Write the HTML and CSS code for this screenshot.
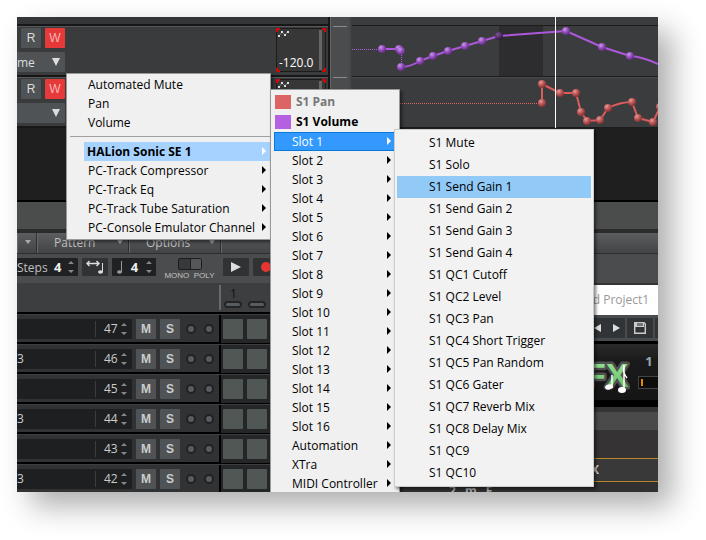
FILE: index.html
```html
<!DOCTYPE html>
<html lang="en">
<head>
<meta charset="utf-8">
<title>Automation menu</title>
<link rel="stylesheet" href="styles.css">
</head>
<body>
<svg class="defs" aria-hidden="true">
  <defs>
    <radialGradient id="violet" cx=".35" cy=".3" r=".75"><stop offset="0" stop-color="#c79ae6"/><stop offset=".5" stop-color="#934dbd"/><stop offset="1" stop-color="#5a2a78"/></radialGradient>
    <radialGradient id="dusk" cx=".35" cy=".3" r=".75"><stop offset="0" stop-color="#7d5596"/><stop offset="1" stop-color="#2c123c"/></radialGradient>
    <radialGradient id="coral" cx=".35" cy=".3" r=".75"><stop offset="0" stop-color="#e79b9b"/><stop offset=".5" stop-color="#b95454"/><stop offset="1" stop-color="#7c3030"/></radialGradient>
    <linearGradient id="leaf" x1="0" y1="0" x2="0" y2="1"><stop offset="0" stop-color="#9be898"/><stop offset="1" stop-color="#63b864"/></linearGradient>
    <symbol id="spin" viewBox="0 0 6 14"><path d="M0 4 3 1 6 4zM0 10 3 13 6 10z" fill="#85898b"/></symbol>
    <symbol id="nodes" viewBox="0 0 11 8"><path d="M1 6 4 2 7 5 10 1" fill="none" stroke="#999" stroke-width=".7"/><path d="M0 5h2v2H0zM3 1h2v2H3zM6 4h2v2H6zM9 1h2v2H9z" fill="#ddd"/></symbol>
    <symbol id="corners" viewBox="0 0 50 44"><path d="M1 4V1H4M46 1H49V4M49 40V43H46M4 43H1V40" fill="none" stroke="#f00" stroke-width="1.6"/></symbol>
  </defs>
</svg>
<main class="app">
  <section class="tracks">
    <div class="console">
      <div class="strip"></div>
      <div class="track">
        <div class="track-controls">
          <div class="pair"><button class="key">R</button><button class="key write">W</button></div>
          <select class="lane-select" aria-label="Track 1 lane"><option>me</option></select>
        </div>
        <div class="readout">
          <svg class="corners"><use href="#corners"/></svg>
          <svg class="nodes"><use href="#nodes"/></svg>
          <span>-120.0</span><i class="meter"></i>
        </div>
      </div>
      <div class="track">
        <div class="track-controls">
          <div class="pair"><button class="key">R</button><button class="key write">W</button></div>
          <select class="lane-select" aria-label="Track 2 lane"><option></option></select>
        </div>
        <div class="readout">
          <svg class="corners"><use href="#corners"/></svg>
          <svg class="nodes"><use href="#nodes"/></svg>
          <i class="meter"></i>
        </div>
      </div>
    </div>
    <div class="gutter"><i></i><i></i></div>
    <svg class="lanes" width="307" height="183" viewBox="351 17 307 183" aria-label="Automation envelopes">
      <path fill="#3b3c3e" d="M351 17h307v111H351z"/>
      <path fill="#2d2d2f" d="M499 26h44v50h-44z"/>
      <path stroke="#1c1c1d" d="M352 25.5H658M352 76.5H658M352 127.5H658" />
      <path stroke="#4a4b4d" d="M352 77.5H658"/>
      <path fill="#1f1f1f" d="M351 128h307v72H351z"/>
      <path stroke="#ad62dc" stroke-dasharray="1 1" fill="none" d="M352 49.5H382M401.500 51V66"/>
      <path stroke="#dc6464" stroke-dasharray="1 1" d="M352 103.500H541"/>
      <path stroke="#ad58dc" stroke-width="2" fill="none" d="M382 49H400M401 67Q410 67 420 61L433 56 448 51 465 46 482 41 499 36 566 31 602 47 630 56Q643 57 658 64"/>
      <path stroke="#dc5c5c" stroke-width="2" fill="none" stroke-linejoin="round" d="M542 103V84L560 93H576L581 112 587 121 600 120 608 108Q620 102 632 102L638 118 653 122 660 107"/>
      <path stroke="#fff" d="M555.500 17V128"/>
      <g fill="url(#violet)"><circle cx="382" cy="49" r="4"/><circle cx="399" cy="49" r="4"/><circle cx="401" cy="51" r="4"/><circle cx="401" cy="67" r="4"/><circle cx="420" cy="61" r="4"/><circle cx="433" cy="56" r="4"/><circle cx="448" cy="51" r="4"/><circle cx="465" cy="46" r="4"/><circle cx="482" cy="41" r="4"/><circle cx="566" cy="31" r="4"/><circle cx="602" cy="47" r="4"/><circle cx="630" cy="56" r="4"/></g>
      <circle cx="499" cy="36" r="4" fill="url(#dusk)"/>
      <g fill="url(#coral)"><circle cx="542" cy="84" r="4"/><circle cx="542" cy="103" r="4"/><circle cx="560" cy="93" r="4"/><circle cx="576" cy="93" r="4"/><circle cx="581" cy="112" r="4"/><circle cx="587" cy="121" r="4"/><circle cx="600" cy="120" r="4"/><circle cx="608" cy="108" r="4"/><circle cx="632" cy="102" r="4"/><circle cx="638" cy="118" r="4"/><circle cx="653" cy="122" r="4"/><circle cx="660" cy="107" r="4"/></g>
    </svg>
  </section>
  <div class="divider"></div>
  <nav class="tabs">
    <button class="tab first" aria-label="View"><i class="down"></i></button>
    <button class="tab">Pattern<i class="down"></i></button>
    <button class="tab">Options<i class="down"></i></button>
    <span class="tab rest"></span>
  </nav>
  <div class="transport">
    <div class="box steps"><span>Steps</span><b>4</b><svg class="spin"><use href="#spin"/></svg></div>
    <button class="box fit" aria-label="Fit to note"><svg width="18" height="14" viewBox="0 0 18 14"><path d="M1 3.500H13M3.500 1 1 3.500 3.500 6M10.500 1 13 3.500 10.500 6" fill="none" stroke="#ddd" stroke-width="1.4"/><path d="M16.500 3V12" stroke="#ddd"/><ellipse cx="14.500" cy="12" rx="2.500" ry="1.800" fill="#ddd"/></svg></button>
    <div class="box beat"><svg width="7" height="14" viewBox="0 0 7 14"><path d="M5.500 1V12" stroke="#999"/><ellipse cx="3.500" cy="12" rx="2.500" ry="1.800" fill="#999"/></svg><b>4</b><svg class="spin"><use href="#spin"/></svg></div>
    <div class="mode"><button class="switch" aria-label="Mono or poly"><i></i></button><span>MONO&nbsp; POLY</span></div>
    <button class="box play" aria-label="Play"><svg width="10" height="10" viewBox="0 0 10 10"><path d="M0 0 10 5 0 10z" fill="#ddd"/></svg></button>
    <button class="box rec" aria-label="Record"><svg width="10" height="10" viewBox="0 0 10 10"><circle cx="5" cy="5" r="5" fill="#e53535"/></svg></button>
  </div>
  <section class="lower">
    <div class="sequencer">
      <div class="ruler"><div class="beats"><span>1</span><div><i></i><i></i></div></div></div>
      <div class="row"><div class="name"><em></em><span>47</span><svg class="spin"><use href="#spin"/></svg></div><button class="key">M</button><button class="key">S</button><i class="dot"></i><i class="dot"></i><div class="cells"><i></i><i></i><i></i></div></div>
      <div class="row"><div class="name"><em>3</em><span>46</span><svg class="spin"><use href="#spin"/></svg></div><button class="key">M</button><button class="key">S</button><i class="dot"></i><i class="dot"></i><div class="cells"><i></i><i></i><i></i></div></div>
      <div class="row"><div class="name"><em></em><span>45</span><svg class="spin"><use href="#spin"/></svg></div><button class="key">M</button><button class="key">S</button><i class="dot"></i><i class="dot"></i><div class="cells"><i></i><i></i><i></i></div></div>
      <div class="row"><div class="name"><em>3</em><span>44</span><svg class="spin"><use href="#spin"/></svg></div><button class="key">M</button><button class="key">S</button><i class="dot"></i><i class="dot"></i><div class="cells"><i></i><i></i><i></i></div></div>
      <div class="row"><div class="name"><em></em><span>43</span><svg class="spin"><use href="#spin"/></svg></div><button class="key">M</button><button class="key">S</button><i class="dot"></i><i class="dot"></i><div class="cells"><i></i><i></i><i></i></div></div>
      <div class="row"><div class="name"><em>3</em><span>42</span><svg class="spin"><use href="#spin"/></svg></div><button class="key">M</button><button class="key">S</button><i class="dot"></i><i class="dot"></i><div class="cells"><i></i><i></i><i></i></div></div>
    </div>
    <div class="plugin">
      <div class="caption">ed Project1</div>
      <div class="plugin-bar">
        <div class="arrows">
          <button aria-label="Previous"><svg width="7" height="8" viewBox="0 0 7 8"><path d="M7 0V8L0 4z" fill="#ddd"/></svg></button>
          <button aria-label="Next"><svg width="7" height="8" viewBox="0 0 7 8"><path d="M0 0V8L7 4z" fill="#ddd"/></svg></button>
        </div>
        <button class="save" aria-label="Save"><svg width="12" height="12" viewBox="0 0 12 12"><path d="M.7.7H10L11.300 2V11.300H.7z" fill="none" stroke="#ccc" stroke-width="1.4"/><path d="M1 1H10V5H1z" fill="#ccc"/><path d="M3 1H9V4H3z" fill="#777"/></svg></button>
        <span class="stub"></span>
      </div>
      <div class="brand">
        <svg class="logo" width="36" height="46" viewBox="0 0 36 46" role="img" aria-label="FX">
          <text x="-9" y="37" class="logo-edge">FX</text>
          <text x="-9" y="37" class="logo-text">FX</text>
          <path d="M18 38V25M30 39V15Q28 22 33 28" fill="none" stroke="#fff" stroke-width="1.500"/>
          <ellipse cx="15" cy="37" rx="4" ry="2.500" fill="#fff" transform="rotate(-15 15 37)"/><ellipse cx="28" cy="40" rx="4" ry="3" fill="#fff"/>
        </svg>
        <div class="slot"><b>1</b><div><i></i></div></div>
      </div>
      <div class="panel-head"></div>
      <div class="panel-body"></div>
      <div class="panel-name"><b>X</b></div>
      <div class="foot"><b>2</b><b>m</b><b>F</b></div>
    </div>
  </section>

  <ul class="menu menu-root" role="menu">
    <li><button role="menuitem">Automated Mute</button></li>
    <li><button role="menuitem">Pan</button></li>
    <li><button role="menuitem">Volume</button></li>
    <li class="rule" role="separator"></li>
    <li class="sub chosen"><button role="menuitem">HALion Sonic SE 1</button></li>
    <li class="sub"><button role="menuitem">PC-Track Compressor</button></li>
    <li class="sub"><button role="menuitem">PC-Track Eq</button></li>
    <li class="sub"><button role="menuitem">PC-Track Tube Saturation</button></li>
    <li class="sub"><button role="menuitem">PC-Console Emulator Channel</button></li>
  </ul>
  <ul class="menu menu-slots" role="menu">
    <li class="param pan"><button role="menuitem">S1 Pan</button></li>
    <li class="param volume"><button role="menuitem">S1 Volume</button></li>
    <li class="sub active"><button role="menuitem">Slot 1</button></li>
    <li class="sub"><button role="menuitem">Slot 2</button></li>
    <li class="sub"><button role="menuitem">Slot 3</button></li>
    <li class="sub"><button role="menuitem">Slot 4</button></li>
    <li class="sub"><button role="menuitem">Slot 5</button></li>
    <li class="sub"><button role="menuitem">Slot 6</button></li>
    <li class="sub"><button role="menuitem">Slot 7</button></li>
    <li class="sub"><button role="menuitem">Slot 8</button></li>
    <li class="sub"><button role="menuitem">Slot 9</button></li>
    <li class="sub"><button role="menuitem">Slot 10</button></li>
    <li class="sub"><button role="menuitem">Slot 11</button></li>
    <li class="sub"><button role="menuitem">Slot 12</button></li>
    <li class="sub"><button role="menuitem">Slot 13</button></li>
    <li class="sub"><button role="menuitem">Slot 14</button></li>
    <li class="sub"><button role="menuitem">Slot 15</button></li>
    <li class="sub"><button role="menuitem">Slot 16</button></li>
    <li class="sub"><button role="menuitem">Automation</button></li>
    <li class="sub"><button role="menuitem">XTra</button></li>
    <li class="sub"><button role="menuitem">MIDI Controller</button></li>
  </ul>
  <ul class="menu menu-params" role="menu">
    <li><button role="menuitem">S1 Mute</button></li>
    <li><button role="menuitem">S1 Solo</button></li>
    <li class="hover"><button role="menuitem">S1 Send Gain 1</button></li>
    <li><button role="menuitem">S1 Send Gain 2</button></li>
    <li><button role="menuitem">S1 Send Gain 3</button></li>
    <li><button role="menuitem">S1 Send Gain 4</button></li>
    <li><button role="menuitem">S1 QC1 Cutoff</button></li>
    <li><button role="menuitem">S1 QC2 Level</button></li>
    <li><button role="menuitem">S1 QC3 Pan</button></li>
    <li><button role="menuitem">S1 QC4 Short Trigger</button></li>
    <li><button role="menuitem">S1 QC5 Pan Random</button></li>
    <li><button role="menuitem">S1 QC6 Gater</button></li>
    <li><button role="menuitem">S1 QC7 Reverb Mix</button></li>
    <li><button role="menuitem">S1 QC8 Delay Mix</button></li>
    <li><button role="menuitem">S1 QC9</button></li>
    <li><button role="menuitem">S1 QC10</button></li>
  </ul>
</main>
</body>
</html>
```
FILE: styles.css
```css
* { box-sizing: border-box; }
body { margin: 0; padding: 17px 48px 48px 17px; background: #fff; font: 12px/19px "Open Sans", "Noto Sans", sans-serif; }
button, select { font: inherit; color: inherit; border: 0; padding: 0; background: none; appearance: none; }
.defs { position: absolute; width: 0; height: 0; }
.app { position: relative; overflow: hidden; background: #1f1f1f; box-shadow: 14px 14px 28px rgba(0, 0, 0, .32); }

/* Track list */
.tracks { display: flex; height: 183px; overflow: hidden; }
.console { flex: 1; border-right: 2px solid #171717; }
.strip { height: 9px; background: #353638; border-bottom: 2px solid #171717; }
.track { display: flex; justify-content: space-between; height: 51px; padding: 1px 2px 0 0; background: #3a3b3d; border-top: 1px solid #55575a; border-bottom: 2px solid #171717; }
.track-controls { position: relative; width: 48px; }
.track-controls::after { content: ""; position: absolute; right: 5px; top: 30px; border: solid transparent; border-width: 8px 4px 0; border-top-color: #ddd; }
.pair { display: flex; gap: 4px; padding-left: 4px; margin-bottom: 4px; }
.key { width: 20px; height: 20px; line-height: 20px; border-radius: 1px; background: #4f5355; color: #ddd; font-family: "Liberation Sans", sans-serif; text-align: center; }
.key.write { background: #e63a3a; color: #f6b4b4; }
.lane-select { display: block; width: 48px; height: 20px; border-radius: 1px; color: #ddd; background: #4f5355; }
.readout { position: relative; display: flex; align-items: flex-end; justify-content: space-between; width: 50px; height: 44px; padding: 0 4px 0 2px; background: #373737; border: 1px solid #1c1c1c; color: #fff; line-height: 16px; }
.corners { position: absolute; top: -1px; left: -1px; width: 50px; height: 44px; }
.nodes { position: absolute; top: 1px; left: 1px; width: 11px; height: 8px; }
.meter { position: absolute; top: 1px; right: 3px; width: 3px; height: 40px; background: #666; }
.gutter { width: 21px; height: 111px; padding: 9px 2px 0; background: #4b4c4e; border-left: 1px solid #666; border-right: 2px solid #464749; }
.gutter i { display: block; height: 51px; border-top: 1px solid #8a8b8c; }
.lanes { flex: none; display: block; }

/* Pattern toolbar */
.divider { height: 33px; background: #4b4d4c; border-top: 2px solid #000; border-bottom: 4px solid #2b2b2c; }
.tabs { display: flex; height: 21px; background: linear-gradient(#5c5d5f, #434446); border-bottom: 1px solid #2e2e2f; }
.tab { display: flex; align-items: center; justify-content: space-between; width: 92px; height: 20px; padding: 0 5px 2px 16px; border-right: 1px solid #2e2e2f; border-left: 1px solid #68696b; color: #c0c0c0; font-size: 12px; }
.tab.first { width: 20px; padding-left: 7px; }
.tab.rest { flex: 1; border-right: 0; }
.down { border: solid transparent; border-width: 4px 3px 0; border-top-color: #aaa; }
.transport { display: flex; align-items: flex-start; gap: 4px; height: 29px; padding-top: 4px; background: #4b4c4e; color: #c0c0c0; }
.box { display: flex; align-items: center; justify-content: center; height: 18px; border-radius: 1px; background: #303234; }
.box b { color: #eee; font-family: "Noto Sans", sans-serif; font-size: 13px; }
.steps, .beat { background: #1f2123; justify-content: space-between; padding-right: 4px; }
.steps { width: 61px; }
.fit { width: 26px; }
.beat { width: 44px; padding-left: 4px; }
.spin { width: 6px; height: 14px; }
.mode { display: flex; flex-direction: column; align-items: center; width: 59px; font: 8px/9px "Liberation Sans", sans-serif; white-space: nowrap; }
.switch { display: flex; justify-content: flex-end; width: 24px; height: 12px; margin-bottom: 1px; border: 1px solid #1d1d1d; border-radius: 2px; background: #38393b; }
.switch i { width: 11px; height: 10px; background: #55585a; border-left: 1px solid #1d1d1d; }
.play { width: 26px; }
.rec { width: 26px; }

/* Step sequencer */
.lower { display: flex; height: 209px; overflow: hidden; }
.sequencer { flex: 1; }
.ruler { height: 31px; padding: 2px 0 0 202px; background: #3d3e40; border-bottom: 2px solid #000; }
.beats { height: 25px; padding: 1px 0 0 3px; border-left: 2px solid #686a6c; color: #111; line-height: 15px; }
.beats span { padding-left: 6px; }
.beats div { display: flex; gap: 6px; }
.beats i { width: 18px; height: 7px; border: 2px solid #222426; border-radius: 4px; background: #555d60; }
.row { display: flex; align-items: flex-start; gap: 4px; height: 30px; background: #313234; border-top: 1px solid #3d3e40; border-bottom: 2px solid #000; }
.row > .key, .name { margin-top: 4px; }
.name { display: flex; align-items: center; width: 115px; height: 20px; padding-right: 5px; background: #1d1f21; color: #ccc; border-radius: 1px; }
.name em { width: 79px; height: 16px; line-height: 16px; font-style: normal; border-right: 1px solid #3a3c3e; }
.name span { flex: 1; padding-left: 8px; line-height: 18px; }
.row .key { font-weight: bold; color: #ccc; }
.dot { width: 10px; height: 10px; margin: 9px 2px 0; border: 2px solid #1f2123; border-radius: 50%; background: #565c5f; }
.cells { display: flex; gap: 4px; flex: 1; height: 28px; margin-left: -1px; padding: 4px 0 0 2px; border-left: 2px solid #000; background: #252628; }
.cells i { width: 20px; height: 20px; border-radius: 1px; background: #505755; }

/* Plug-in window */
.plugin { display: flex; flex-direction: column; width: 258px; padding: 2px 0 0 194px; background: #353535; }
.plugin > * { flex: none; }
.caption { height: 30px; background: #fff; color: #999; line-height: 30px; white-space: nowrap; text-indent: -8px; }
.plugin-bar { display: flex; gap: 2px; height: 29px; padding-top: 3px; background: #4a4b4d; border-bottom: 3px solid #000; }
.plugin-bar button { display: flex; }
.arrows { display: flex; align-items: center; gap: 12px; width: 31px; height: 20px; background: #303436; }
.plugin-bar .save { align-items: center; justify-content: center; width: 26px; height: 20px; background: #303436; }
.stub { flex: 1; height: 20px; background: #303436; }
.brand { display: flex; justify-content: space-between; height: 63px; padding-top: 6px; background: linear-gradient(#2a2a2a, #1a1a1a 30%, #151515); border-bottom: 7px solid #000; }
.logo-text, .logo-edge { font: bold 34px "Liberation Sans", sans-serif; fill: url(#leaf); }
.logo-edge { fill: none; stroke: #505050; stroke-width: 5px; stroke-linejoin: round; }
.slot { width: 20px; color: #9aa7b0; text-align: center; font-size: 13px; line-height: 22px; }
.slot b { padding-left: 2px; }
.slot div { height: 13px; margin-top: 4px; padding: 2px; border: 1px solid #444; border-right: 0; background: #0c0c0c; }
.slot i { display: block; width: 2px; height: 7px; background: #e08b00; }
.panel-head { height: 23px; border-top: 5px solid #353535; background: #4a4a4a; }
.panel-body { height: 28px; background: #353333; }
.panel-name { height: 24px; border: solid #b8862b; border-width: 1px 0; background: #393939; color: #ccc; line-height: 21px; }
.panel-name b { margin-left: -3px; }
.foot { display: flex; gap: 9px; height: 10px; margin-left: -194px; padding-left: 49px; overflow: hidden; background: #313131; color: #aaa; line-height: 18px; }

/* Menus */
.menu { position: absolute; margin: 0; list-style: none; background: #f0f0f0; border: 1px solid #999; color: #000; box-shadow: 2px 2px 3px rgba(0, 0, 0, .5); }
.menu li { position: relative; height: 19px; }
.menu button { display: block; width: 100%; height: 100%; text-align: left; white-space: nowrap; }
.menu .sub::after { content: ""; position: absolute; right: 4px; top: 50%; margin-top: -5px; border: solid transparent; border-width: 4px 0 4px 4px; border-left-color: #000; }
.menu-root { left: 49px; top: 56px; width: 205px; padding: 1px 0 2px 17px; }
.menu-root button { padding-left: 4px; }
.menu-root .rule { height: 6px; margin: 4px 0 0 -14px; border-top: 1px solid #a0a0a0; }
.menu-root .chosen { background: #a6d2ff; font-weight: bold; }
.menu-root .chosen button { padding-left: 3px; }
.menu .chosen::after, .menu .active::after { border-left-color: #fff; }
.menu-slots { left: 253px; top: 72px; width: 130px; padding: 2px 3px 3px; }
.menu-slots button { padding-left: 18px; }
.menu-slots .sub::after { right: 5px; }
.menu-slots .active { background: #3399ff; color: #fff; box-shadow: inset 0 0 0 1px #0a78d7; }
.menu-slots .param { height: 20px; padding-left: 4px; font-weight: bold; }
.menu-slots .param button { padding-bottom: 2px; }
.menu-slots .param::before { content: ""; position: absolute; left: 1px; top: 3px; width: 16px; height: 14px; background: #dc6464; }
.menu-slots .volume::before { background: #b460e0; }
.pan { color: #777; }
.menu-params { left: 377px; top: 112px; width: 200px; padding: 2px; background: #f2f2f2; border-color: #ccc; }
.menu-params li { height: 22px; }
.menu-params button { padding: 0 0 2px 32px; }
.menu-params .hover { background: #91c9f7; }
```
